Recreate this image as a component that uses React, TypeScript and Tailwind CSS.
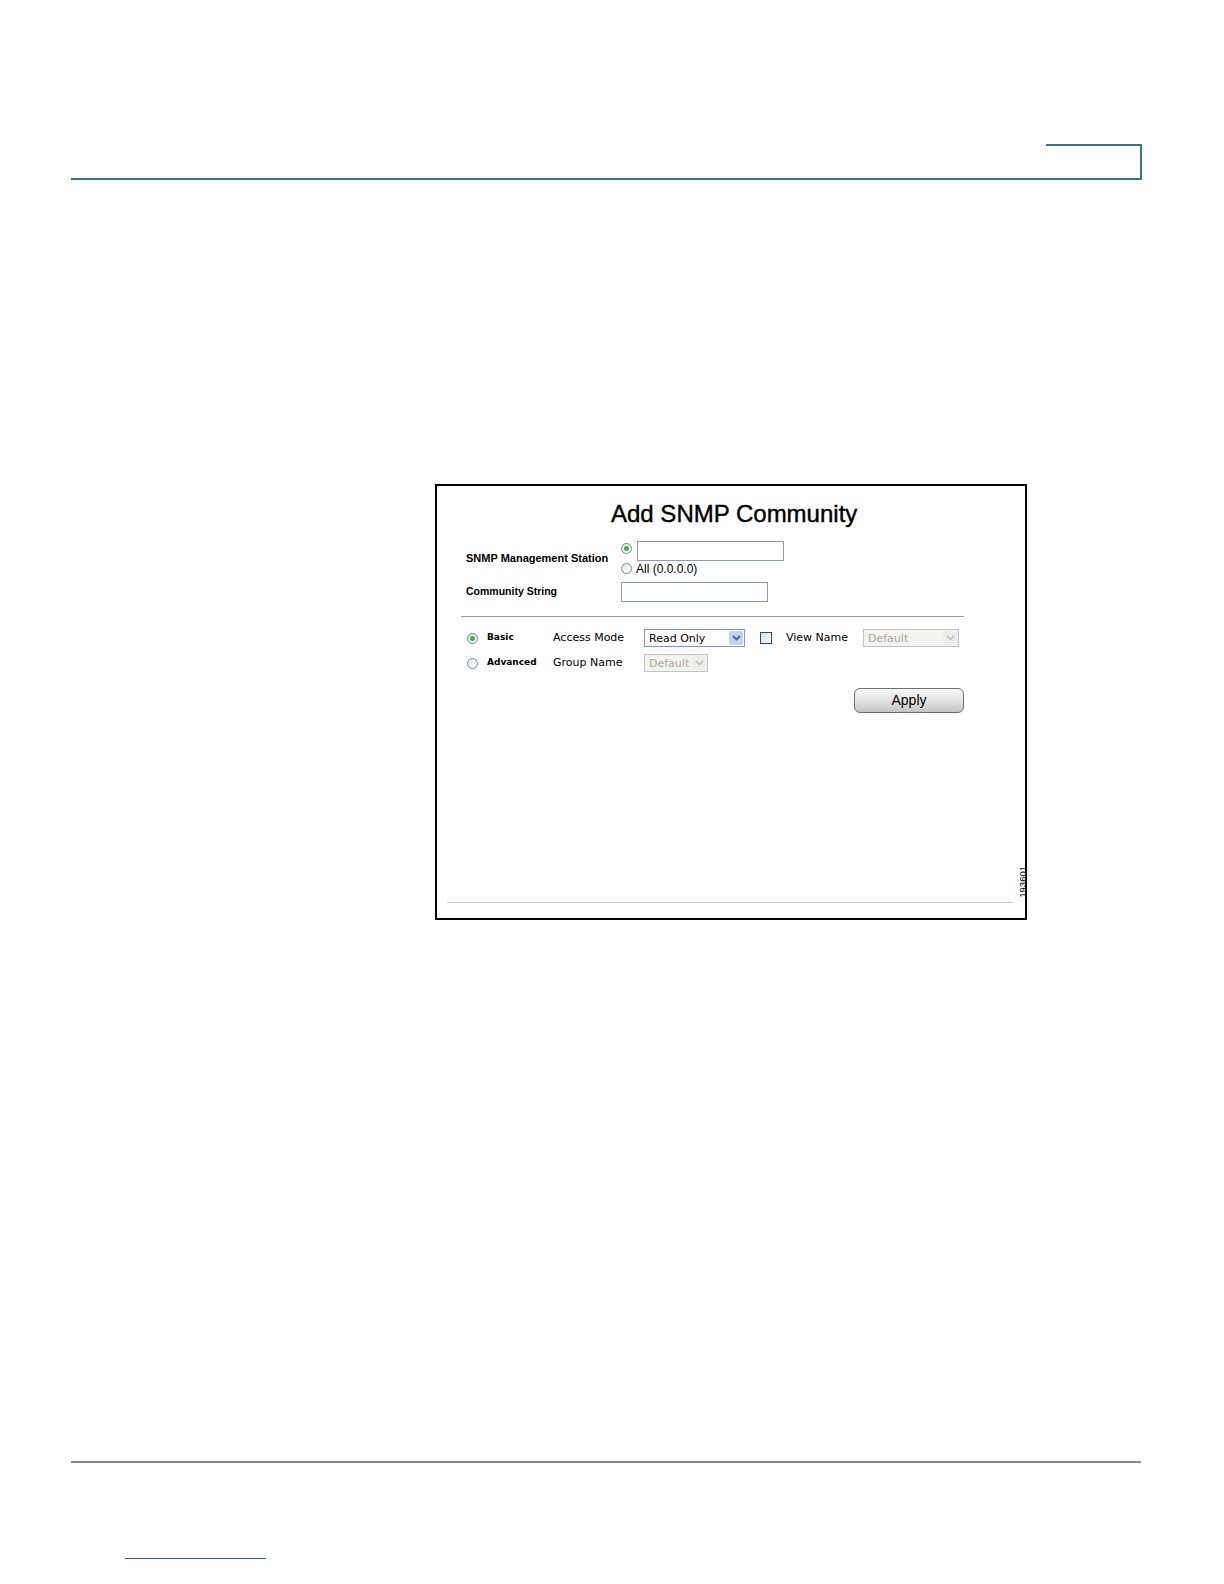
import React from 'react';

const sans = "font-['Liberation_Sans',Arial,sans-serif]";
const dv = "font-['DejaVu_Sans',Verdana,sans-serif]";

function Radio({ checked }: { checked?: boolean }) {
  return (
    <span className="w-[11px] h-[11px] shrink-0 rounded-full border border-[#6b84a6] bg-gradient-to-br from-[#e6e6e0] to-white flex items-center justify-center">
      {checked && <span className="w-[5px] h-[5px] rounded-full bg-[#3fb23f]" />}
    </span>
  );
}

function Chevron({ color }: { color: string }) {
  return (
    <svg width="9" height="6" viewBox="0 0 9 6">
      <path d="M1 1 L4.5 4.5 L8 1" fill="none" stroke={color} strokeWidth="1.8" />
    </svg>
  );
}

function Select({ label, width, disabled }: { label: string; width: string; disabled?: boolean }) {
  return (
    <div
      className={`${width} h-[18px] shrink-0 flex items-center justify-between border ${
        disabled ? 'border-[#b8c4d2] bg-[#f3f3ef] text-[#aca899]' : 'border-[#7f9db9] bg-white text-black'
      } ${dv} text-[11px] pl-[4px] pr-px`}
    >
      <span className="leading-none">{label}</span>
      <span
        className={`w-[14px] h-[14px] rounded-[2px] flex items-center justify-center ${
          disabled ? 'bg-[#eeeee8]' : 'bg-[#c1d3fb]'
        }`}
      >
        <Chevron color={disabled ? '#c9c7ba' : '#4d6185'} />
      </span>
    </div>
  );
}

export default function App() {
  return (
    <div className="w-[1224px] h-[1584px] bg-white flex flex-col">
      {/* page header */}
      <div className="mt-[144px] ml-[71px] w-[1071px] flex flex-col">
        <div className="self-end w-[96px] h-[34px] border-t-2 border-r-2 border-[#3d7585]" />
        <div className="h-[2px] bg-[#3d7585]" />
      </div>

      {/* figure */}
      <div className="mt-[304px] ml-[435px] w-[592px] h-[436px] border-2 border-black flex flex-col relative">
        <h1
          className={`${sans} text-[24px] leading-[28px] mt-[14px] ml-[174px] text-black [-webkit-text-stroke:0.4px_black]`}
        >
          Add SNMP Community
        </h1>

        <div className="flex ml-[29px] mt-[13px]">
          <div className={`w-[155px] h-[34px] flex items-center ${sans} text-[11px] font-bold`}>
            SNMP Management Station
          </div>
          <div className="flex flex-col">
            <div className="h-[20px] flex items-start gap-[5px]">
              <span className="mt-[2px]">
                <Radio checked />
              </span>
              <div className="w-[147px] h-[20px] border border-[#8a9cb4] bg-white" />
            </div>
            <div className="h-[14px] flex items-center">
              <Radio />
              <span className={`${sans} text-[12px] ml-[4px] leading-none mt-[2px]`}>All (0.0.0.0)</span>
            </div>
          </div>
        </div>

        <div className="flex ml-[29px] mt-[7px]">
          <div className={`w-[155px] h-[20px] flex items-center ${sans} text-[10.5px] font-bold`}>
            Community String
          </div>
          <div className="w-[147px] h-[20px] border border-[#8a9cb4] bg-white" />
        </div>

        <div className="mt-[14px] ml-[24px] w-[503px] h-px bg-[#9a9a9a]" />

        <div className="flex items-center ml-[30px] mt-[12px] h-[18px]">
          <Radio checked />
          <span className={`${dv} text-[9px] font-bold ml-[9px] w-[66px]`}>Basic</span>
          <span className={`${dv} text-[11px] w-[91px]`}>Access Mode</span>
          <Select label="Read Only" width="w-[101px]" />
          <span className="ml-[15px] w-[12px] h-[12px] border border-[#1c5180] bg-gradient-to-br from-[#dcdcd6] to-white" />
          <span className={`${dv} text-[11px] ml-[14px] w-[77px]`}>View Name</span>
          <Select label="Default" width="w-[96px]" disabled />
        </div>

        <div className="flex items-center ml-[30px] mt-[7px] h-[18px]">
          <Radio />
          <span className={`${dv} text-[9px] font-bold ml-[9px] w-[66px]`}>Advanced</span>
          <span className={`${dv} text-[11px] w-[91px]`}>Group Name</span>
          <Select label="Default" width="w-[64px]" disabled />
        </div>

        <button
          className={`mt-[16px] ml-[417px] w-[110px] h-[25px] rounded-[6px] border border-[#6f6f6f] bg-gradient-to-b from-[#f7f7f7] via-[#e4e4e4] to-[#c4c4c4] ${sans} text-[14px] text-black flex items-center justify-center`}
        >
          Apply
        </button>

        <div className="mt-auto mb-[15px] ml-[10px] w-[566px] h-px bg-[#c8c8c8]" />

        <span
          className={`absolute right-[-2px] bottom-[20px] ${sans} text-[9.5px] leading-none [writing-mode:vertical-rl] rotate-180`}
        >
          193601
        </span>
      </div>

      {/* page footer */}
      <div className="mt-[541px] ml-[71px] w-[1070px] h-[2px] bg-[#8a8a8a]" />
      <div className="mt-[95px] ml-[125px] w-[141px] h-px bg-[#3355aa]" />
    </div>
  );
}
